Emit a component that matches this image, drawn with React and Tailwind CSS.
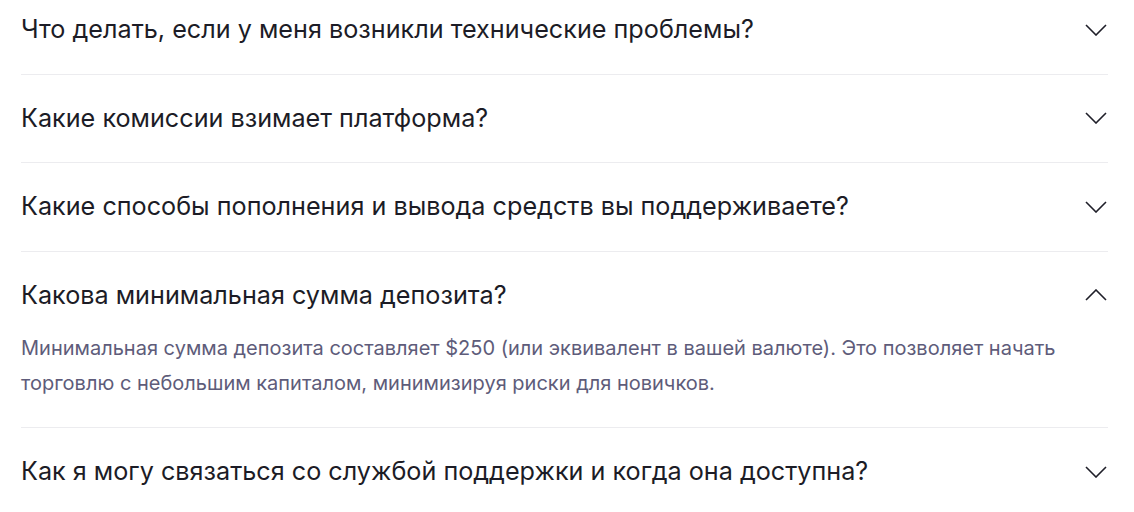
import React, { useState } from "react";

const faqs = [
  {
    q: "Что делать, если у меня возникли технические проблемы?",
    a: "",
  },
  { q: "Какие комиссии взимает платформа?", a: "" },
  { q: "Какие способы пополнения и вывода средств вы поддерживаете?", a: "" },
  {
    q: "Какова минимальная сумма депозита?",
    a: "Минимальная сумма депозита составляет $250 (или эквивалент в вашей валюте). Это позволяет начать торговлю с небольшим капиталом, минимизируя риски для новичков.",
  },
  { q: "Как я могу связаться со службой поддержки и когда она доступна?", a: "" },
];

const Chevron = ({ open }) => (
  <svg
    width="22"
    height="12"
    viewBox="0 0 22 12"
    fill="none"
    stroke="#1f1f29"
    strokeWidth="1.6"
    className={open ? "rotate-180" : ""}
  >
    <polyline points="1,1 11,11 21,1" />
  </svg>
);

export default function App() {
  const [openIndex, setOpenIndex] = useState(3);

  return (
    <div className="bg-white min-h-screen font-['Inter',sans-serif] overflow-hidden">
      <div className="mx-[21px] w-[1087px] -mt-[14px]">
        {faqs.map((item, i) => (
          <div key={i} className={i < faqs.length - 1 ? "border-b border-[#ececef]" : ""}>
            <button
              className="w-full flex items-center justify-between py-7 text-left"
              onClick={() => setOpenIndex(openIndex === i ? null : i)}
            >
              <span className="text-[25.2px] leading-[31.5px] text-[#1c1c26]">{item.q}</span>
              <span className="mr-[1px]">
                <Chevron open={openIndex === i} />
              </span>
            </button>
            {openIndex === i && (
              <div className="-mt-2 pb-[26px]">
                <p className="text-[20px] leading-[35px] text-[#5e5c7a]">{item.a}</p>
              </div>
            )}
          </div>
        ))}
      </div>
    </div>
  );
}
